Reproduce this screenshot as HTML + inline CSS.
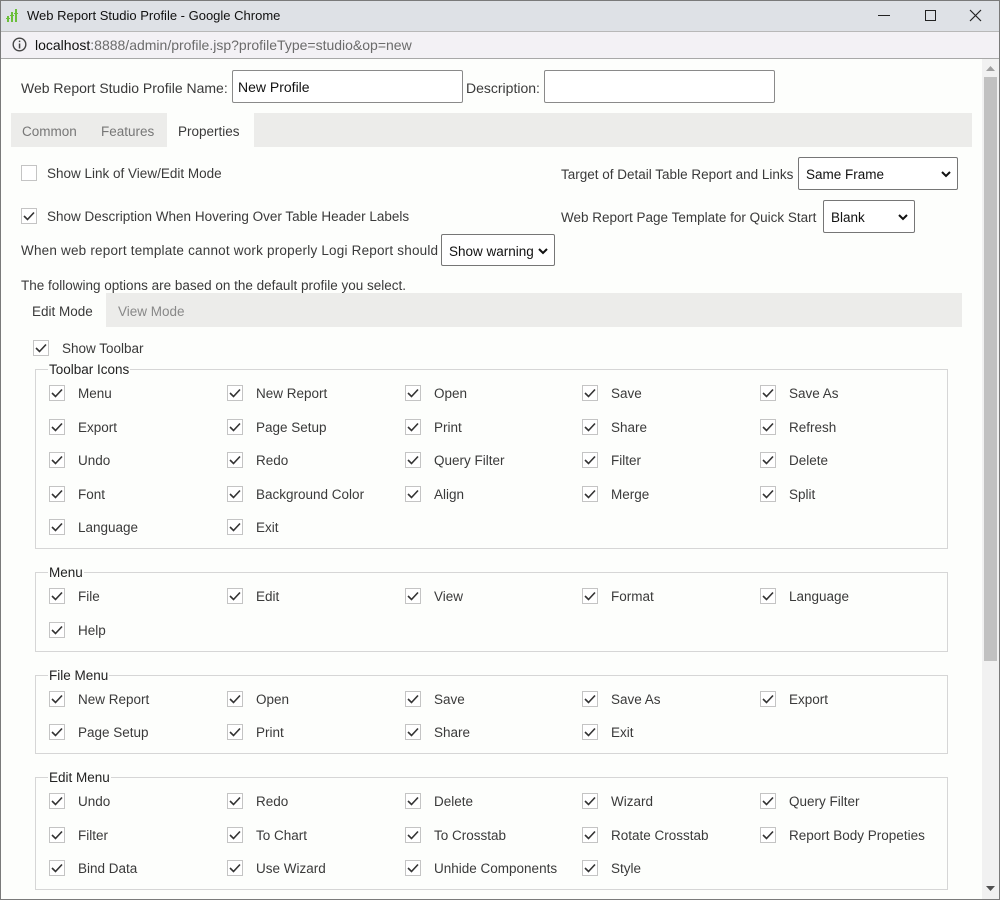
<!DOCTYPE html>
<html><head><meta charset="utf-8"><style>
*{margin:0;padding:0;box-sizing:border-box}
body{width:1000px;height:900px;overflow:hidden;background:#fdfefc;font-family:"Liberation Sans",sans-serif;font-size:13.5px;color:#3a3a3a;position:relative}
.a{position:absolute;white-space:nowrap}
.t{position:absolute;white-space:nowrap;margin-top:1px}
#win{position:absolute;left:0;top:0;width:1000px;height:900px;border:1px solid #7a7a7a;pointer-events:none}
#title{position:absolute;left:0;top:0;width:1000px;height:32px;background:#dee1e6;border-bottom:1px solid #b8b8b8}
#addr{position:absolute;left:0;top:32px;width:1000px;height:27px;background:#f3f1f5;border-bottom:1px solid #a8a8a8}
.inp{position:absolute;border:1px solid #8a8a8a;background:#fff;height:33px;border-radius:2px;font-size:14px;color:#111;padding:8px 5px}
.sel{position:absolute;border:1px solid #767676;background:#fff;height:33px;border-radius:2px;font-size:13.5px;color:#111;padding:9px 7px}
.sel svg{position:absolute;right:6px;top:13px}
.cb{position:absolute;width:16px;height:16px;border:1px solid #c4c4c4;background:#fff}
.cb svg{position:absolute;left:1px;top:2px}
.fs{position:absolute;left:35px;width:913px;border:1px solid #d6d6d6}
.lg{position:absolute;background:#fdfefc;padding:0 1px;color:#222;font-size:13.5px;margin-top:1px}
</style></head><body>
<div id="title"></div>
<svg class="a" style="left:6px;top:8px" width="14" height="16" viewBox="0 0 14 16"><g fill="#6bbf3a"><rect x="1" y="8" width="2" height="6"/><rect x="5" y="4" width="2" height="10"/><rect x="9" y="1" width="2" height="13"/><rect x="0" y="10" width="4" height="1"/><rect x="4" y="7" width="4" height="1"/><rect x="8" y="5" width="4" height="1"/></g></svg>
<div class="a" style="left:27px;top:8px;font-size:13px;color:#111">Web Report Studio Profile - Google Chrome</div>
<div class="a" style="left:878px;top:15px;width:12px;height:1px;background:#222"></div>
<div class="a" style="left:925px;top:10px;width:11px;height:11px;border:1px solid #222"></div>
<svg class="a" style="left:969px;top:9px" width="13" height="13"><path d="M1 1L12 12M12 1L1 12" stroke="#222" stroke-width="1.2"/></svg>
<div id="addr"></div>
<svg class="a" style="left:12px;top:37px" width="15" height="15"><circle cx="7.5" cy="7.5" r="6.3" fill="none" stroke="#444" stroke-width="1.4"/><rect x="6.8" y="6.5" width="1.5" height="5" fill="#444"/><rect x="6.8" y="3.6" width="1.5" height="1.5" fill="#444"/></svg>
<div class="a" style="left:35px;top:37px;font-size:14px;color:#6b6b6b"><span style="color:#111">localhost</span>:8888/admin/profile.jsp?profileType=studio&amp;op=new</div>
<div class="a" style="left:982px;top:59px;width:17px;height:840px;background:#f1f1f1"></div>
<svg class="a" style="left:986px;top:66px" width="9" height="6"><path d="M0 5L4.5 0L9 5Z" fill="#a0a0a0"/></svg>
<div class="a" style="left:984px;top:77px;width:13px;height:584px;background:#c1c1c1"></div>
<svg class="a" style="left:986px;top:886px" width="9" height="6"><path d="M0 0L4.5 5L9 0Z" fill="#505050"/></svg>

<div class="t" style="left:21px;top:79px;font-size:14px">Web Report Studio Profile Name:</div>
<div class="inp" style="left:232px;top:70px;width:231px">New Profile</div>
<div class="t" style="left:466px;top:79px;font-size:14px">Description:</div>
<div class="inp" style="left:544px;top:70px;width:231px"></div>

<div class="a" style="left:11px;top:113px;width:961px;height:34px;background:#ececea"></div>
<div class="a" style="left:167px;top:113px;width:87px;height:34px;background:#fdfefc"></div>
<div class="t" style="left:22px;top:123px;color:#777">Common</div>
<div class="t" style="left:101px;top:123px;color:#777">Features</div>
<div class="t" style="left:178px;top:123px">Properties</div>

<div class="cb" style="left:21px;top:165px"></div>
<div class="t" style="left:47px;top:165px">Show Link of View/Edit Mode</div>
<div class="cb" style="left:21px;top:208px"><svg width="12" height="10"><path d="M1 5L4.5 8.5L11 1.5" fill="none" stroke="#333" stroke-width="1.6"/></svg></div>
<div class="t" style="left:47px;top:208px">Show Description When Hovering Over Table Header Labels</div>
<div class="t" style="left:21px;top:242px;letter-spacing:0.2px">When web report template cannot work properly Logi Report should</div>
<div class="sel" style="left:441px;top:234px;width:114px;height:32px">Show warning<svg width="10" height="7"><path d="M1 1L5 5L9 1" fill="none" stroke="#111" stroke-width="2"/></svg></div>
<div class="t" style="left:21px;top:277px">The following options are based on the default profile you select.</div>
<div class="t" style="left:561px;top:166px">Target of Detail Table Report and Links</div>
<div class="sel" style="left:798px;top:157px;width:160px">Same Frame<svg width="10" height="7"><path d="M1 1L5 5L9 1" fill="none" stroke="#111" stroke-width="2"/></svg></div>
<div class="t" style="left:561px;top:209px">Web Report Page Template for Quick Start</div>
<div class="sel" style="left:823px;top:200px;width:92px">Blank<svg width="10" height="7"><path d="M1 1L5 5L9 1" fill="none" stroke="#111" stroke-width="2"/></svg></div>

<div class="a" style="left:21px;top:293px;width:941px;height:34px;background:#ececea"></div>
<div class="a" style="left:21px;top:293px;width:85px;height:34px;background:#fdfefc"></div>
<div class="t" style="left:32px;top:303px">Edit Mode</div>
<div class="t" style="left:118px;top:303px;color:#888">View Mode</div>

<div class="cb" style="left:33px;top:340px"><svg width="12" height="10"><path d="M1 5L4.5 8.5L11 1.5" fill="none" stroke="#333" stroke-width="1.6"/></svg></div>
<div class="t" style="left:62px;top:340px">Show Toolbar</div>

<div class="fs" style="top:369px;height:180px"></div><div class="lg a" style="left:48px;top:361px">Toolbar Icons</div>
<div class="fs" style="top:572px;height:80px"></div><div class="lg a" style="left:48px;top:564px">Menu</div>
<div class="fs" style="top:675px;height:79px"></div><div class="lg a" style="left:48px;top:667px">File Menu</div>
<div class="fs" style="top:777px;height:113px"></div><div class="lg a" style="left:48px;top:769px">Edit Menu</div>

<div id="items"></div>
<script>
var C=[49,227,405,582,760];
var rows=[
[393,["Menu","New Report","Open","Save","Save As"]],
[427,["Export","Page Setup","Print","Share","Refresh"]],
[460,["Undo","Redo","Query Filter","Filter","Delete"]],
[494,["Font","Background Color","Align","Merge","Split"]],
[527,["Language","Exit"]],
[596,["File","Edit","View","Format","Language"]],
[630,["Help"]],
[699,["New Report","Open","Save","Save As","Export"]],
[732,["Page Setup","Print","Share","Exit"]],
[801,["Undo","Redo","Delete","Wizard","Query Filter"]],
[835,["Filter","To Chart","To Crosstab","Rotate Crosstab","Report Body Propeties"]],
[868,["Bind Data","Use Wizard","Unhide Components","Style"]]];
var h="";
rows.forEach(function(r){r[1].forEach(function(t,i){
h+='<div class="cb" style="left:'+C[i]+'px;top:'+(r[0]-8)+'px"><svg width="12" height="10"><path d="M1 5L4.5 8.5L11 1.5" fill="none" stroke="#333" stroke-width="1.6"/></svg></div>';
h+='<div class="t" style="left:'+(C[i]+29)+'px;top:'+(r[0]-8)+'px">'+t+'</div>';});});
document.getElementById("items").innerHTML=h;
</script>
<div id="win"></div>
</body></html>
